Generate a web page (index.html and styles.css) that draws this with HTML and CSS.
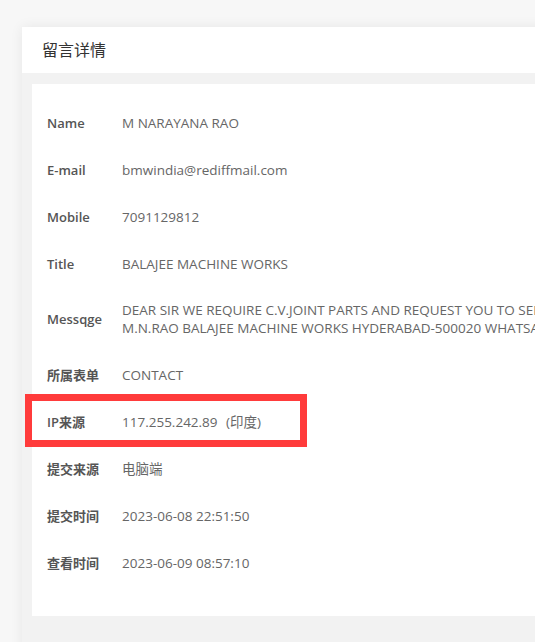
FILE: index.html
```html
<!DOCTYPE html>
<html lang="zh-CN">
<head>
    <meta charset="UTF-8">
    <meta name="viewport" content="width=device-width, initial-scale=1.0">
    <title>留言详情</title>
    <link rel="stylesheet" href="styles.css">
</head>
<body>
    <div class="card">
        <div class="card-header">留言详情</div>
        <div class="card-body">
            <div class="detail-panel">
                <table class="detail-table">
                    <tr>
                        <th>Name</th>
                        <td>M NARAYANA RAO</td>
                    </tr>
                    <tr>
                        <th>E-mail</th>
                        <td>bmwindia@rediffmail.com</td>
                    </tr>
                    <tr>
                        <th>Mobile</th>
                        <td>7091129812</td>
                    </tr>
                    <tr>
                        <th>Title</th>
                        <td>BALAJEE MACHINE WORKS</td>
                    </tr>
                    <tr class="message-row">
                        <th>Messqge</th>
                        <td class="message">DEAR SIR WE REQUIRE C.V.JOINT PARTS AND REQUEST YOU TO SEND YOUR BEST QUOTATION
M.N.RAO BALAJEE MACHINE WORKS HYDERABAD-500020 WHATSAPP 7091129812</td>
                    </tr>
                    <tr>
                        <th>所属表单</th>
                        <td>CONTACT</td>
                    </tr>
                    <tr class="marked">
                        <th>IP来源</th>
                        <td>117.255.242.89 <span class="ip-region">(印度)</span><div class="highlight-box"></div></td>
                    </tr>
                    <tr>
                        <th>提交来源</th>
                        <td>电脑端</td>
                    </tr>
                    <tr>
                        <th>提交时间</th>
                        <td>2023-06-08 22:51:50</td>
                    </tr>
                    <tr>
                        <th>查看时间</th>
                        <td>2023-06-09 08:57:10</td>
                    </tr>
                </table>
            </div>
        </div>
    </div>
</body>
</html>
```

FILE: styles.css
```css
html, body {
    height: 100%;
    overflow: hidden;
}
body {
    margin: 0;
    padding: 27px 0 0 22px;
    background: #f7f7f7;
    font-family: "Open Sans", "Noto Sans CJK SC", sans-serif;
    font-size: 13px;
    color: #595959;
}
.card {
    width: 760px;
    background: #fff;
    box-shadow: 0 0 12px rgba(0,0,0,0.07);
}
.card-header {
    height: 46px;
    line-height: 46px;
    padding-left: 20px;
    font-size: 16px;
    color: #333;
}
.card-body {
    background: #f2f2f2;
    padding: 11px 0 26px 10px;
    height: 600px;
}
.detail-panel {
    background: #fff;
    padding: 15px 15px 30px;
}
.detail-table {
    border-collapse: collapse;
}
.detail-table th,
.detail-table td {
    padding: 14.5px 0;
    line-height: 18px;
    text-align: left;
    vertical-align: middle;
}
.detail-table th {
    width: 75px;
    font-weight: 600;
    color: #555;
}
.detail-table td {
    font-size: 13.5px;
    color: #666;
    white-space: nowrap;
}
.message-row th,
.message-row td {
    padding: 14px 0;
}
.detail-table td.message {
    white-space: pre-line;
}
.marked td {
    position: relative;
}
.ip-region {
    margin-left: 5px;
}
.highlight-box {
    position: absolute;
    left: -97px;
    top: -4px;
    width: 268px;
    height: 39px;
    border: 7px solid #ff3b3b;
}
```
